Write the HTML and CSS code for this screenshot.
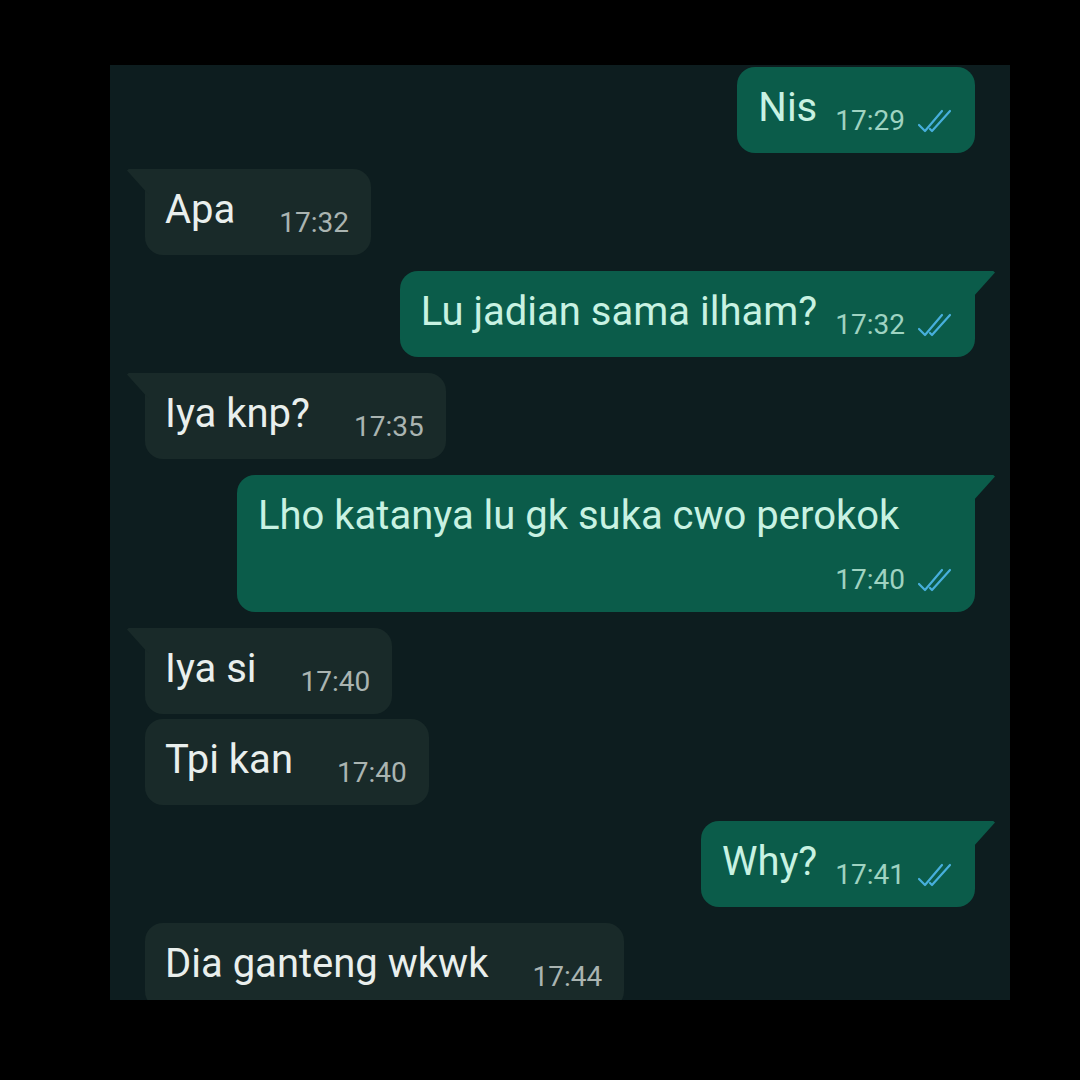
FILE: index.html
```html
<!DOCTYPE html>
<html>
<head>
<meta charset="utf-8">
<link rel="stylesheet" href="styles.css">
</head>
<body>
<div class="screen">
  <div class="msg out">
    <span class="text">Nis</span>
    <span class="meta"><span class="time">17:29</span><svg class="ticks" viewBox="0 0 38 26"><path d="M2 17 L8 23 L25 3 M13 21 L15 23 L33 3"/></svg></span>
  </div>
  <div class="msg in tail">
    <span class="text">Apa</span>
    <span class="meta"><span class="time">17:32</span></span>
  </div>
  <div class="msg out tail">
    <span class="text">Lu jadian sama ilham?</span>
    <span class="meta"><span class="time">17:32</span><svg class="ticks" viewBox="0 0 38 26"><path d="M2 17 L8 23 L25 3 M13 21 L15 23 L33 3"/></svg></span>
  </div>
  <div class="msg in tail">
    <span class="text">Iya knp?</span>
    <span class="meta"><span class="time">17:35</span></span>
  </div>
  <div class="msg out tail wide">
    <span class="text">Lho katanya lu gk suka cwo perokok</span>
    <span class="meta"><span class="time">17:40</span><svg class="ticks" viewBox="0 0 38 26"><path d="M2 17 L8 23 L25 3 M13 21 L15 23 L33 3"/></svg></span>
  </div>
  <div class="msg in tail">
    <span class="text">Iya si</span>
    <span class="meta"><span class="time">17:40</span></span>
  </div>
  <div class="msg in grouped">
    <span class="text">Tpi kan</span>
    <span class="meta"><span class="time">17:40</span></span>
  </div>
  <div class="msg out tail">
    <span class="text">Why?</span>
    <span class="meta"><span class="time">17:41</span><svg class="ticks" viewBox="0 0 38 26"><path d="M2 17 L8 23 L25 3 M13 21 L15 23 L33 3"/></svg></span>
  </div>
  <div class="msg in">
    <span class="text">Dia ganteng wkwk</span>
    <span class="meta"><span class="time">17:44</span></span>
  </div>
</div>
</body>
</html>
```
FILE: styles.css
```css
html, body {
  margin: 0;
  padding: 0;
  background: #000;
}
body {
  width: 1080px;
  height: 1080px;
  padding-top: 65px;
  box-sizing: border-box;
  font-family: Roboto, "Liberation Sans", sans-serif;
}
.screen {
  margin-left: 110px;
  width: 900px;
  height: 935px;
  box-sizing: border-box;
  padding: 2px 35px 0 20px;
  background: #0d1d1f;
  overflow: hidden;
  display: flex;
  flex-direction: column;
}
.msg {
  position: relative;
  display: flex;
  align-items: flex-end;
  border-radius: 18px;
  padding: 19px 20px 18px 21px;
  flex-shrink: 0;
}
.msg + .msg {
  margin-top: 16px;
}
.msg.grouped {
  margin-top: 5px;
}
.text {
  font-size: 40px;
  line-height: 44px;
  padding-bottom: 5px;
  white-space: nowrap;
}
.meta {
  display: flex;
  align-items: center;
  gap: 12px;
}
.time {
  font-size: 28px;
  line-height: 28px;
}
.ticks {
  width: 38px;
  height: 26px;
  fill: none;
  stroke: #47afdc;
  stroke-width: 2.2;
  stroke-linecap: round;
  stroke-linejoin: round;
}
.out {
  align-self: flex-end;
  background: #0b5c4a;
}
.out .text {
  color: #c8f2e2;
}
.out .time {
  color: #9fd3c1;
}
.out .meta {
  margin-left: 18px;
}
.in {
  align-self: flex-start;
  margin-left: 15px;
  background: #192a29;
  padding-left: 20px;
  padding-right: 22px;
}
.in .text {
  color: #e9efed;
}
.in .time {
  color: #aab4b1;
}
.in .meta {
  margin-left: 44px;
}
.tail::before {
  content: "";
  position: absolute;
  top: 0;
  width: 22px;
  height: 26px;
  background: inherit;
}
.out.tail {
  border-top-right-radius: 0;
}
.out.tail::before {
  right: -20px;
  clip-path: polygon(0 0, 92% 0, 100% 6%, 0 100%);
}
.in.tail {
  border-top-left-radius: 0;
}
.in.tail::before {
  left: -18px;
  clip-path: polygon(8% 0, 100% 0, 100% 100%, 0 6%);
}
.wide {
  flex-direction: column;
  align-items: stretch;
  width: 738px;
  box-sizing: border-box;
}
.wide .meta {
  align-self: flex-end;
  margin-top: 23px;
}
```
